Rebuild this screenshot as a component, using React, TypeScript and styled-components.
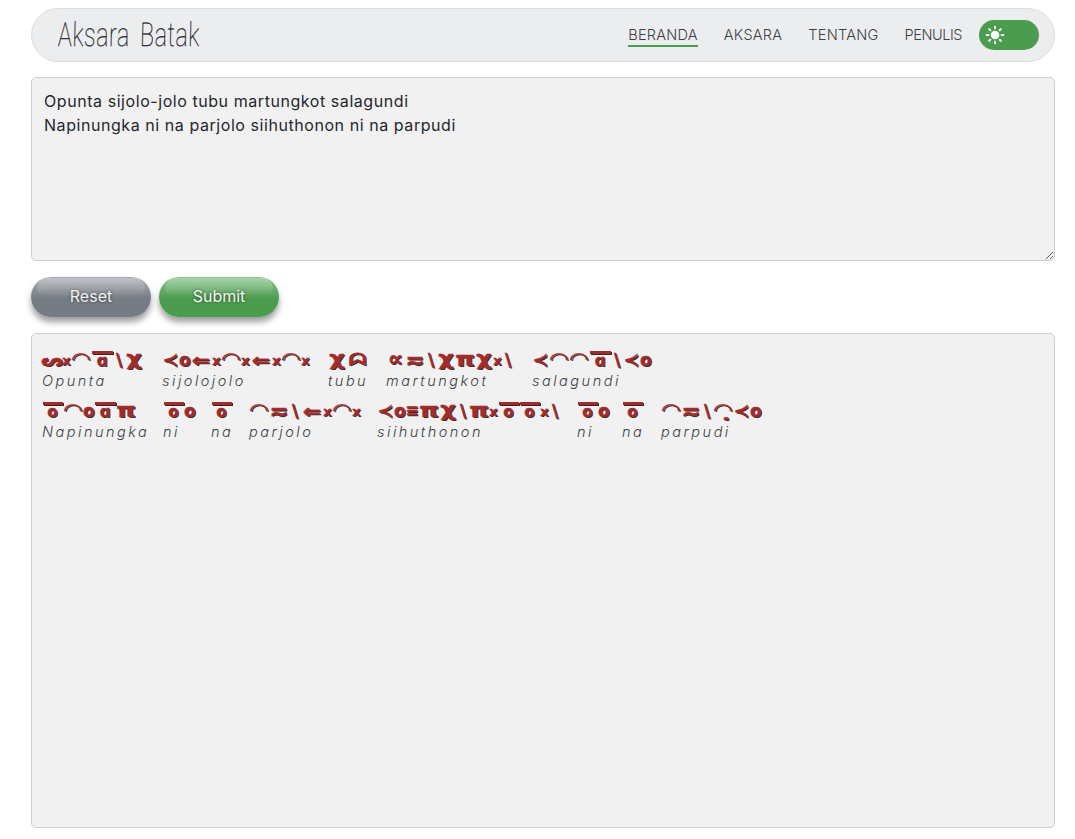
import React from "react";
import styled, { createGlobalStyle } from "styled-components";
import { Sun } from "lucide-react";

const Global = createGlobalStyle`
  html, body { margin: 0; padding: 0; background: #fff; }
  body { font-family: Inter, "Open Sans", "Liberation Sans", sans-serif; }
`;

const Page = styled.div`
  display: flex;
  flex-direction: column;
  height: 839px;
  box-sizing: border-box;
  padding: 8px 20px 11px 31px;
  overflow: hidden;
`;

const NavBar = styled.header`
  display: flex;
  align-items: center;
  justify-content: space-between;
  flex: none;
  height: 54px;
  box-sizing: border-box;
  padding: 0 15px 0 26px;
  background: #ecedef;
  border: 1px solid #dcdddf;
  border-radius: 27px;
`;

const Logo = styled.div`
  font-family: Roboto, "Liberation Sans", sans-serif;
  font-weight: 100;
  font-size: 33px;
  line-height: 54px;
  letter-spacing: 0.8px;
  word-spacing: 6px;
  white-space: nowrap;
  color: #1f2226;
  -webkit-text-stroke: 0.3px #1f2226;
  transform: scaleX(0.705) skewX(-2deg);
  transform-origin: left center;
`;

const NavRight = styled.nav`
  display: flex;
  align-items: center;
  gap: 26px;
`;

const NavLink = styled.a<{ $active?: boolean; $ls: number }>`
  font-size: 14.5px;
  font-weight: 300;
  line-height: 20px;
  letter-spacing: ${(p) => p.$ls}px;
  white-space: nowrap;
  color: #3d4044;
  border-bottom: 2px solid ${(p) => (p.$active ? "#4c9c4f" : "transparent")};
  margin-top: 2px;
`;

const Toggle = styled.div`
  display: flex;
  align-items: center;
  width: 60px;
  height: 30px;
  box-sizing: border-box;
  padding-left: 6px;
  margin-left: -9px;
  border-radius: 15px;
  background: #4c9c4f;
  color: #fff;
`;

const Input = styled.textarea`
  display: block;
  flex: none;
  margin-top: 15px;
  height: 184px;
  box-sizing: border-box;
  padding: 11px 12px 12px;
  font-family: inherit;
  font-size: 16px;
  letter-spacing: 0.56px;
  line-height: 24px;
  color: #24272b;
  background: #f1f1f2;
  border: 1px solid #cfcfcf;
  border-radius: 5px;
  outline: none;
`;

const Buttons = styled.div`
  display: flex;
  flex: none;
  gap: 8px;
  margin-top: 16px;
`;

const GlossButton = styled.button<{ $tone: string; $light: string }>`
  position: relative;
  width: 120px;
  height: 40px;
  padding: 0 0 2px;
  border: none;
  border-radius: 20px;
  font-family: inherit;
  font-size: 16px;
  font-weight: 400;
  color: #f2f4f2;
  text-shadow: 0 0 3px rgba(0, 0, 0, 0.6);
  background: linear-gradient(${(p) => p.$light}, ${(p) => p.$tone} 55%);
  box-shadow: 0 5px 6px rgba(0, 0, 0, 0.38);
  &::before {
    content: "";
    position: absolute;
    left: 6px;
    right: 6px;
    top: 1px;
    height: 17px;
    border-radius: 16px 16px 10px 10px;
    background: linear-gradient(rgba(255, 255, 255, 0.28), rgba(255, 255, 255, 0.03));
  }
`;

const Result = styled.section`
  flex: 1;
  margin-top: 16px;
  box-sizing: border-box;
  padding: 7px 10px;
  background: #f1f1f2;
  border: 1px solid #cfcfcf;
  border-radius: 5px;
`;

const Line = styled.div`
  display: flex;
  height: 51px;
`;

const Word = styled.div<{ $w: number }>`
  display: flex;
  flex-direction: column;
  flex: none;
  width: ${(p) => p.$w}px;
`;

const Batak = styled.div`
  display: flex;
  align-items: center;
  height: 30px;
  padding-top: 7px;
  box-sizing: border-box;
  font-family: "DejaVu Sans", sans-serif;
  font-weight: 700;
  color: #a52a2a;
  -webkit-text-stroke: 0.4px #a52a2a;
  text-shadow: 1px 1px 0 #2a2a2a;
  white-space: nowrap;
`;

const Sign = styled.span<{ $w: number; $fs: number; $sx: number; $dy: number }>`
  display: inline-block;
  flex: none;
  width: ${(p) => p.$w}px;
  height: 16px;
  line-height: 16px;
  text-align: center;
  font-size: ${(p) => p.$fs}px;
  transform: translateY(${(p) => p.$dy}px) scaleX(${(p) => p.$sx});
`;

const Over = styled.span<{ $w: number }>`
  display: inline-flex;
  flex: none;
  flex-direction: column;
  align-items: center;
  width: ${(p) => p.$w}px;
  height: 17px;
  line-height: 12px;
  font-size: 15px;
  &::before {
    content: "";
    width: calc(100% - 1px);
    height: 3px;
    margin-bottom: 1px;
    background: #a52a2a;
    box-shadow: 1px 1px 0 #2a2a2a;
  }
`;

type Token = { c: string; w: number; over?: boolean; fs?: number; sx?: number; dy?: number };
const T: Record<string, Token> = {
  u: { c: "ᔕ", w: 20, fs: 17, sx: 1.15 },
  x: { c: "x", w: 9, fs: 13, dy: 1 },
  arc: { c: "◠", w: 20, fs: 18, sx: 1.25, dy: -1 },
  rev: { c: "◠", w: 20, fs: 18, sx: 1.25, dy: -1 },
  bs: { c: "\\", w: 12, fs: 17 },
  ta: { c: "χ", w: 18, fs: 20, sx: 1.2, dy: -2 },
  s: { c: "≺", w: 17, fs: 18, sx: 1.05 },
  o: { c: "ο", w: 11, fs: 17 },
  ja: { c: "⇐", w: 22, fs: 19, sx: 1.15 },
  bu: { c: "ᗣ", w: 22, fs: 16, sx: 1.3 },
  ma: { c: "∝", w: 19, fs: 21, dy: -1 },
  ra: { c: "≂", w: 20, fs: 23 },
  n: { c: "π", w: 20, fs: 19, sx: 1.3, dy: -1 },
  i: { c: "≡", w: 14, fs: 16 },
  lt: { c: "≺", w: 17, fs: 18, sx: 1.05 },
  pu: { c: "◠̣", w: 20, fs: 18, sx: 1.25, dy: -1 },
  ga: { c: "ɑ", w: 22, over: true },
  na: { c: "ο", w: 21, over: true },
};

const seq = (s: string) => s.split(" ").map((k) => T[k]);

const lines: { latin: string; w: number; g: string }[][] = [
  [
    { latin: "Opunta", w: 120, g: "u x arc ga bs ta" },
    { latin: "sijolojolo", w: 166, g: "s o ja x arc x ja x arc x" },
    { latin: "tubu", w: 58, g: "ta bu" },
    { latin: "martungkot", w: 146, g: "ma ra bs ta n ta x bs" },
    { latin: "salagundi", w: 124, g: "s arc rev ga bs lt o" },
  ],
  [
    { latin: "Napinungka", w: 121, g: "na arc o ga n" },
    { latin: "ni", w: 48, g: "na o" },
    { latin: "na", w: 38, g: "na" },
    { latin: "parjolo", w: 128, g: "arc ra bs ja x arc x" },
    { latin: "siihuthonon", w: 200, g: "s o i n ta bs n x na na x bs" },
    { latin: "ni", w: 45, g: "na o" },
    { latin: "na", w: 39, g: "na" },
    { latin: "parpudi", w: 110, g: "arc ra bs pu lt o" },
  ],
];

const Latin = styled.div`
  font-style: italic;
  font-weight: 300;
  font-size: 14.5px;
  line-height: 20px;
  letter-spacing: 2.5px;
  color: #3c3f44;
  white-space: nowrap;
`;

const navItems = [
  { label: "BERANDA", active: true, ls: 0.26 },
  { label: "AKSARA", ls: 0.26 },
  { label: "TENTANG", ls: 0.26 },
  { label: "PENULIS", ls: -0.45 },
];

export default function App() {
  return (
    <Page>
      <Global />
      <NavBar>
        <Logo>Aksara Batak</Logo>
        <NavRight>
          {navItems.map((n) => (
            <NavLink key={n.label} $active={n.active} $ls={n.ls}>
              {n.label}
            </NavLink>
          ))}
          <Toggle>
            <Sun size={20} fill="#fff" strokeWidth={2.4} />
          </Toggle>
        </NavRight>
      </NavBar>
      <Input
        defaultValue={"Opunta sijolo-jolo tubu martungkot salagundi\nNapinungka ni na parjolo siihuthonon ni na parpudi"}
      />
      <Buttons>
        <GlossButton $tone="#767c84" $light="#a9adb2">Reset</GlossButton>
        <GlossButton $tone="#4c9c4f" $light="#8cc48e">Submit</GlossButton>
      </Buttons>
      <Result>
        {lines.map((line, i) => (
          <Line key={i}>
            {line.map((w, j) => (
              <Word key={j} $w={w.w}>
                <Batak>
                  {seq(w.g).map((t, k) =>
                    t.over ? (
                      <Over key={k} $w={t.w}>{t.c}</Over>
                    ) : (
                      <Sign key={k} $w={t.w} $fs={t.fs ?? 17} $sx={t.sx ?? 1} $dy={t.dy ?? 0}>
                        {t.c}
                      </Sign>
                    )
                  )}
                </Batak>
                <Latin>{w.latin}</Latin>
              </Word>
            ))}
          </Line>
        ))}
      </Result>
    </Page>
  );
}
